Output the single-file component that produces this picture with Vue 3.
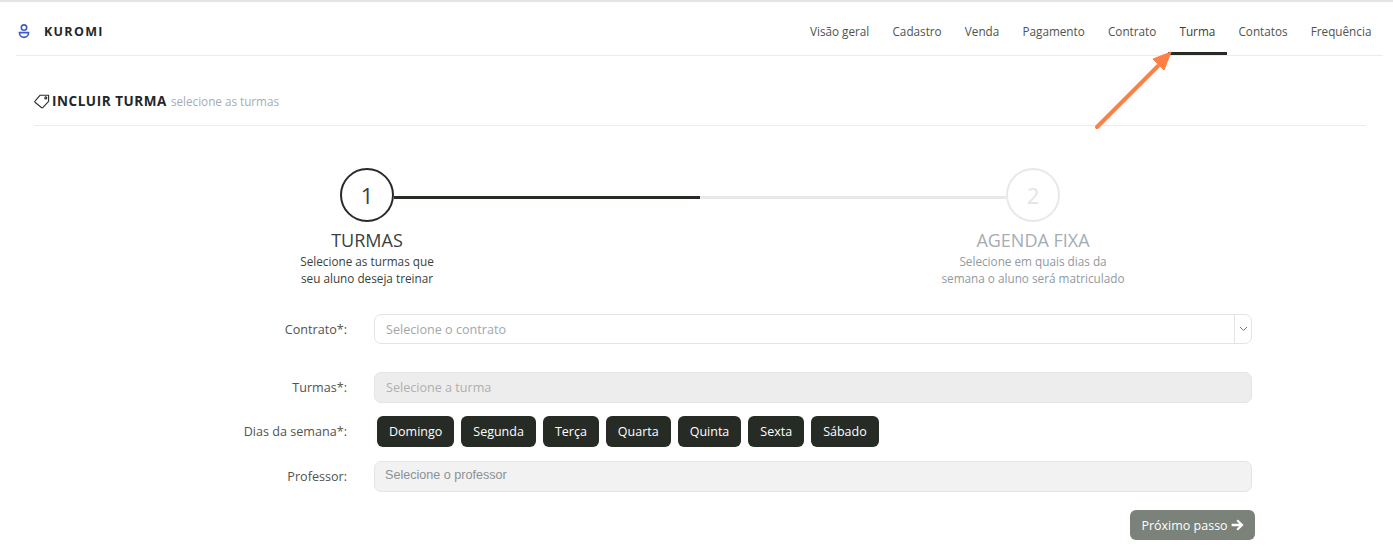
<script setup>
const tabs = ['Visão geral', 'Cadastro', 'Venda', 'Pagamento', 'Contrato', 'Turma', 'Contatos', 'Frequência']
const dias = ['Domingo', 'Segunda', 'Terça', 'Quarta', 'Quinta', 'Sexta', 'Sábado']
</script>

<template>
  <div class="page">
    <header class="top">
      <div class="brand">
        <svg class="logo" width="12" height="15" viewBox="0 0 12 15" fill="none" stroke="#3f5cc4" stroke-width="1.6">
          <circle cx="6" cy="3.6" r="2.7" />
          <path d="M1.4 8.6h9.2a4.6 4.8 0 0 1-9.2 0z" />
        </svg>
        <span>KUROMI</span>
      </div>
      <nav class="tabs">
        <a v-for="t in tabs" :key="t" class="tab" :class="{active: t === 'Turma'}">{{ t }}</a>
      </nav>
    </header>

    <section class="content">
      <div class="title">
        <svg width="16" height="15" viewBox="0 0 16 15" fill="none" stroke="#2b2f2c" stroke-width="1.1" stroke-linejoin="round">
          <path d="M6.2 1.2h8.4v6.1l-5.8 6.4a.8.8 0 0 1-1.1 0L1 8.2a.8.8 0 0 1 0-1.1z" />
          <circle cx="11.8" cy="3.9" r="1" />
        </svg>
        <strong>INCLUIR TURMA</strong>
        <small>selecione as turmas</small>
      </div>

      <div class="track-row">
        <div class="circle">1</div>
        <div class="track"><div class="fill"></div></div>
        <div class="circle off">2</div>
      </div>
      <div class="step-texts">
        <div class="step">
          <h3>TURMAS</h3>
          <p>Selecione as turmas que<br>seu aluno deseja treinar</p>
        </div>
        <div class="step off">
          <h3>AGENDA FIXA</h3>
          <p>Selecione em quais dias da<br>semana o aluno será matriculado</p>
        </div>
      </div>

      <form class="form" @submit.prevent>
        <label class="r1">Contrato*:</label>
        <div class="field select r1">
          <span>Selecione o contrato</span>
          <i class="caret">
            <svg width="9" height="6" viewBox="0 0 9 6" fill="none" stroke="#777" stroke-width="1"><path d="M1 1l3.5 3.5L8 1" /></svg>
          </i>
        </div>

        <label class="r2">Turmas*:</label>
        <div class="field disabled r2"><span>Selecione a turma</span></div>

        <label class="r3">Dias da semana*:</label>
        <div class="days r3">
          <button v-for="d in dias" :key="d" type="button" class="day">{{ d }}</button>
        </div>

        <label class="r4">Professor:</label>
        <div class="field prof r4"><span>Selecione o professor</span></div>
      </form>

      <div class="actions">
        <button type="button" class="next">
          Próximo passo
          <svg width="13" height="12" viewBox="0 0 12 11" fill="#fff"><path d="M6.4.4 11.6 5.5 6.4 10.6 5 9.2l2.7-2.6H.6V4.4h7.1L5 1.8z" /></svg>
        </button>
      </div>
    </section>

    <svg class="arrow" width="90" height="90" viewBox="0 0 90 90" fill="#ff7f45">
      <path d="M5 77 66 16" stroke="#ff7f45" stroke-width="4" stroke-linecap="round" />
      <path d="M79 2 72 20 61 9z" stroke="#ff7f45" stroke-width="1" stroke-linejoin="round" />
    </svg>
  </div>
</template>

<style>
html, body { background: #fff; }
</style>

<style scoped>
.page {
  position: relative;
  height: 549px;
  overflow: hidden;
  box-sizing: border-box;
  background: #fff;
  border-top: 2px solid #e4e4e4;
  font-family: "Open Sans", sans-serif;
  font-size: 12.6px;
  color: #4f5451;
}
.top {
  display: flex;
  justify-content: space-between;
  align-items: stretch;
  height: 53px;
  margin: 0 10px 0 16px;
  border-bottom: 1px solid #ececec;
}
.brand {
  display: flex;
  align-items: center;
  padding: 6px 0 0 2px;
  gap: 14px;
  font-weight: 700;
  font-size: 12.5px;
  letter-spacing: 1.3px;
  color: #23272b;
}
.tabs { display: flex; }
.tab {
  display: flex;
  align-items: center;
  padding: 8px 11.6px 0;
  height: 53px;
  box-sizing: border-box;
  border-bottom: 3px solid transparent;
  white-space: nowrap;
  font-size: 11.72px;
}
.tab.active { border-bottom-color: #272b26; color: #3a3f3c; }
.content { margin: 0 27px 0 34px; }
.title {
  display: flex;
  align-items: center;
  height: 70px;
  padding-top: 21px;
  box-sizing: border-box;
  border-bottom: 1px solid #ececec;
  gap: 2px;
  margin-bottom: 42px;
}
.title strong {
  font-size: 13.5px;
  letter-spacing: 0.55px;
  font-weight: 700;
  color: #23272b;
}
.title small { font-size: 11.7px; color: #a4adb3; margin-left: 2px; }
.track-row {
  display: flex;
  align-items: center;
  width: 720px;
  margin-left: 306px;
}
.circle {
  flex: none;
  width: 54px;
  height: 54px;
  box-sizing: border-box;
  border: 2px solid #272b26;
  border-radius: 50%;
  display: flex;
  align-items: center;
  justify-content: center;
  font-size: 22px;
  color: #3a3f3c;
  background: #fff;
}
.circle.off { border-color: #e8e8e8; color: #e4e4e4; }
.track { flex: 1; height: 3px; background: #e8e8e8; margin-top: 4px; }
.fill { width: 50%; height: 100%; background: #272b26; }
.step-texts {
  display: flex;
  justify-content: space-between;
  width: 866px;
  margin-left: 233px;
  margin-top: 7px;
}
.step { width: 200px; text-align: center; color: #3a3f3c; }
.step h3 {
  margin: 0;
  font-weight: 400;
  font-size: 18px;
  line-height: 23px;
}
.step p { margin: 0; font-size: 11.75px; line-height: 17px; padding-top: 1px; }
.step.off h3 { color: #a4adb3; }
.step.off p { color: #929a9f; }
.form {
  display: grid;
  grid-template-columns: 147px 878px;
  column-gap: 27px;
  margin: 27px 0 0 166px;
  align-items: center;
}
.form label { text-align: right; }
.r1 { grid-row: 1; }
.r2 { grid-row: 2; }
.r3 { grid-row: 3; }
.r4 { grid-row: 4; }
.field {
  height: 30px;
  box-sizing: border-box;
  border: 1px solid #e4e4e4;
  border-radius: 7px;
  padding: 0 11px;
  display: flex;
  align-items: center;
  color: #a2a6a9;
}
.select { justify-content: space-between; padding-right: 0; margin-bottom: 28px; }
.caret {
  display: flex;
  align-items: center;
  justify-content: center;
  width: 16px;
  height: 100%;
  border-left: 1px solid #e4e4e4;
}
.form label.r1 { margin-bottom: 28px; }
.disabled { height: 31px; background: #ededed; color: #aeb0b1; margin-bottom: 13px; }
.form label.r2 { margin-bottom: 13px; }
.days { display: flex; gap: 7px; padding-left: 3px; margin-bottom: 14px; }
.form label.r3 { margin-bottom: 14px; }
.day {
  height: 31px;
  padding: 0 12px;
  border: none;
  border-radius: 6px;
  background: #272b26;
  color: #fff;
  font: inherit;
  font-size: 12.5px;
}
.prof {
  height: 31px;
  background: #f2f2f2;
  font-family: "Liberation Sans", Arial, sans-serif;
  font-size: 12.6px;
  color: #8d9092;
  padding: 0 10px 4px;
}
.actions {
  display: flex;
  justify-content: flex-end;
  margin-top: 18px;
  padding-right: 111px;
}
.next {
  display: flex;
  align-items: center;
  justify-content: center;
  gap: 3px;
  width: 125px;
  height: 30px;
  padding: 0;
  border: none;
  border-radius: 6px;
  background: #7b8279;
  color: #fff;
  font: inherit;
  font-size: 12.5px;
}
.arrow { position: absolute; left: 1092px; top: 48px; }
</style>
